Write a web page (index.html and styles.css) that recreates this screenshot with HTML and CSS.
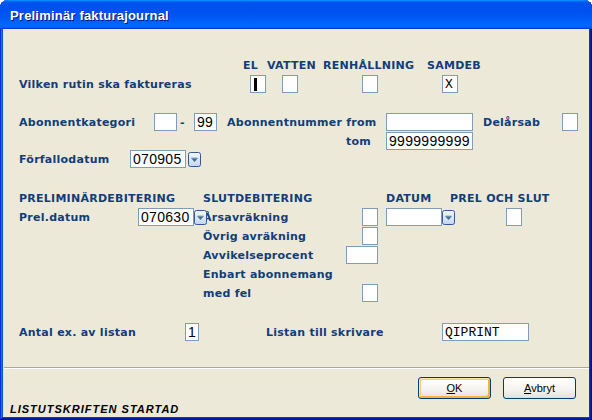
FILE: index.html
```html
<!DOCTYPE html>
<html lang="sv">
<head>
<meta charset="utf-8">
<title>Preliminär fakturajournal</title>
<link rel="stylesheet" href="styles.css">
</head>
<body>
<div class="window">
  <div class="titlebar"><span class="title">Preliminär fakturajournal</span></div>
  <div class="client">
    <div class="form">
      <div class="row hdr hdr-top">
        <span class="h-el">EL</span>
        <span class="h-vatten">VATTEN</span>
        <span class="h-renh">RENHÅLLNING</span>
        <span>SAMDEB</span>
      </div>

      <div class="row r-rutin">
        <span class="lbl w-rutin">Vilken rutin ska faktureras</span>
        <span class="box chk"><span class="caret"></span></span>
        <span class="box chk gap16"></span>
        <span class="box chk gap64"></span>
        <span class="box chk gap64 mono">X</span>
      </div>

      <div class="row r-kat">
        <span class="lbl w-kat">Abonnentkategori</span>
        <span class="box kat"></span>
        <span class="lbl dash">-</span>
        <span class="box kat val">99</span>
        <span class="lbl w-from">Abonnentnummer from</span>
        <span class="box num"></span>
        <span class="lbl w-delar">Delårsab</span>
        <span class="box chk"></span>
      </div>

      <div class="row r-tom">
        <span class="lbl w-tom">tom</span>
        <span class="box num val">9999999999</span>
      </div>

      <div class="row r-forf">
        <span class="lbl w-forf">Förfallodatum</span>
        <span class="box date val">070905</span>
        <span class="drop gap2"><svg width="13" height="15" viewBox="0 0 13 15"><defs><linearGradient id="g1" x1="0" y1="0" x2="0" y2="1"><stop offset="0" stop-color="#f4f8ff"/><stop offset="1" stop-color="#c3d4f3"/></linearGradient></defs><rect x="0.5" y="0.5" width="12" height="14" rx="2" fill="url(#g1)" stroke="#34578f"/><path d="M3 6 L10 6 L6.5 10 Z" fill="#4d6a8c"/><path d="M3.5 6 L9.5 6" stroke="#8fb4c9" stroke-width="1"/></svg></span>
      </div>

      <div class="row hdr hdr-mid">
        <span class="w-prelhdr">PRELIMINÄRDEBITERING</span>
        <span class="w-sluthdr">SLUTDEBITERING</span>
        <span class="w-datumhdr">DATUM</span>
        <span>PREL OCH SLUT</span>
      </div>

      <div class="row r-prel">
        <span class="lbl w-preldat">Prel.datum</span>
        <span class="box date val">070630</span>
        <span class="drop over"><svg width="13" height="15" viewBox="0 0 13 15"><defs><linearGradient id="g2" x1="0" y1="0" x2="0" y2="1"><stop offset="0" stop-color="#f4f8ff"/><stop offset="1" stop-color="#c3d4f3"/></linearGradient></defs><rect x="0.5" y="0.5" width="12" height="14" rx="2" fill="url(#g2)" stroke="#34578f"/><path d="M3 6 L10 6 L6.5 10 Z" fill="#4d6a8c"/><path d="M3.5 6 L9.5 6" stroke="#8fb4c9" stroke-width="1"/></svg></span>
        <span class="lbl w-ars">Årsavräkning</span>
        <span class="box chk"></span>
        <span class="box date gap8"></span>
        <span class="drop"><svg width="13" height="15" viewBox="0 0 13 15"><defs><linearGradient id="g3" x1="0" y1="0" x2="0" y2="1"><stop offset="0" stop-color="#f4f8ff"/><stop offset="1" stop-color="#c3d4f3"/></linearGradient></defs><rect x="0.5" y="0.5" width="12" height="14" rx="2" fill="url(#g3)" stroke="#34578f"/><path d="M3 6 L10 6 L6.5 10 Z" fill="#4d6a8c"/><path d="M3.5 6 L9.5 6" stroke="#8fb4c9" stroke-width="1"/></svg></span>
        <span class="box chk gap51"></span>
      </div>

      <div class="row r-sub">
        <span class="lbl w-sub">Övrig avräkning</span>
        <span class="box chk"></span>
      </div>
      <div class="row r-sub">
        <span class="lbl w-avv">Avvikelseprocent</span>
        <span class="box pct"></span>
      </div>
      <div class="row r-sub">
        <span class="lbl w-sub">Enbart abonnemang</span>
      </div>
      <div class="row r-sub">
        <span class="lbl w-sub">med fel</span>
        <span class="box chk"></span>
      </div>

      <div class="row r-antal">
        <span class="lbl w-antal">Antal ex. av listan</span>
        <span class="box one val">1</span>
        <span class="lbl w-listan">Listan till skrivare</span>
        <span class="box num mono">QIPRINT</span>
      </div>
    </div>

    <div class="sep"></div>

    <div class="buttons">
      <button class="btn default"><u>O</u>K</button>
      <button class="btn"><u>A</u>vbryt</button>
    </div>

    <div class="status">LISTUTSKRIFTEN STARTAD</div>
  </div>
</div>
</body>
</html>
```

FILE: styles.css
```css
* { box-sizing: border-box; }
html, body { margin: 0; padding: 0; }
body {
  width: 592px;
  height: 420px;
  overflow: hidden;
  background: #ffffff;
  font-family: "DejaVu Sans", Verdana, sans-serif;
}

.window {
  width: 592px;
  height: 420px;
  display: flex;
  flex-direction: column;
  padding: 0 3px 3px 3px;
  background: #0058ee;
  border-radius: 8px 8px 0 0;
  box-shadow: inset -1px -1px #00138c, inset 1px 1px #0831d9, inset -2px -2px #001ea0, inset 2px 2px #166aee, inset -3px -3px #003bda, inset 3px 3px #0855dd;
}

.titlebar {
  height: 29px;
  margin: 0 -3px;
  flex: none;
  display: flex;
  align-items: center;
  padding: 2px 0 0 10px;
  border-radius: 8px 8px 0 0;
  background: linear-gradient(180deg, #0997ff, #0053ee 8%, #0050ee 40%, #0066ff 88%, #0066ff 93%, #005bff 95%, #003dd7 96%, #003dd7);
}
.title {
  color: #ffffff;
  font-family: "Liberation Sans", Arial, sans-serif;
  font-weight: bold;
  font-size: 13px;
  letter-spacing: 0.2px;
  text-shadow: 1px 1px #0f1089;
}

.client {
  flex: 1;
  background: #ece9d8;
  display: flex;
  flex-direction: column;
}

.form { padding-left: 16px; }

.row {
  display: flex;
  align-items: center;
  height: 18px;
}

.lbl, .hdr {
  color: #123d79;
  font-weight: bold;
  font-size: 11px;
  letter-spacing: 0.25px;
  white-space: nowrap;
  flex: none;
}
.hdr { height: 14px; }

.hdr-top { margin-top: 29px; padding-left: 224px; }
.h-el { width: 24px; }
.h-vatten { width: 56px; }
.h-renh { width: 104px; }

.r-rutin { margin-top: 3px; }
.w-rutin { width: 231px; }

.r-kat { margin-top: 20px; }
.w-kat { width: 135px; }
.dash { width: 17px; padding-left: 3px; }
.w-from { width: 159px; margin-left: 10px; }
.w-delar { width: 79px; margin-left: 10px; }

.r-tom { margin-top: 1px; }
.w-tom { width: 40px; margin-left: 327px; }

.r-forf { margin-top: 0; }
.w-forf { width: 111px; }

.hdr-mid { margin-top: 23px; }
.w-prelhdr { width: 184px; }
.w-sluthdr { width: 183px; }
.w-datumhdr { width: 64px; }

.r-prel { margin-top: 3px; }
.w-preldat { width: 119px; }
.w-ars { width: 159px; margin-left: -4px; }

.r-sub { margin-top: 1px; padding-left: 184px; }
.w-sub { width: 159px; }
.w-avv { width: 143px; }

.r-antal { margin-top: 21px; }
.w-antal { width: 166px; }
.w-listan { width: 176px; margin-left: 67px; }

.box {
  flex: none;
  height: 18px;
  background: #ffffff;
  border: 1px solid #7f9db9;
  display: flex;
  align-items: center;
  padding-left: 2px;
  font-family: "Liberation Sans", Arial, sans-serif;
  font-size: 14px;
  letter-spacing: 0.3px;
  color: #000000;
}
.chk { width: 16px; }
.kat { width: 23px; }
.num { width: 87px; }
.date { width: 56px; }
.pct { width: 32px; }
.one { width: 14px; padding-left: 2px; }

.gap2 { margin-left: 2px; }
.gap8 { margin-left: 8px; }
.gap16 { margin-left: 16px; }
.gap51 { margin-left: 51px; }
.gap64 { margin-left: 64px; }

.mono {
  font-family: "Liberation Mono", "Courier New", monospace;
  font-size: 13px;
  letter-spacing: 0;
}
.chk.mono { padding-left: 2px; }

.caret {
  display: block;
  width: 3px;
  height: 13px;
  margin-left: 1px;
  background: #000000;
}

.drop {
  flex: none;
  width: 13px;
  height: 15px;
  display: block;
  line-height: 0;
}
.drop svg { display: block; }
.drop.over { position: relative; z-index: 1; }

.sep {
  margin: 26px 0 0 1px;
  height: 2px;
  border-top: 1px solid #aca899;
  border-bottom: 1px solid #ffffff;
}

.buttons {
  margin-top: 8px;
  display: flex;
  justify-content: flex-end;
  gap: 12px;
  padding-right: 13px;
}
.btn {
  width: 73px;
  height: 22px;
  margin: 0;
  padding: 0;
  border: 1px solid #003c74;
  border-radius: 3px;
  background: linear-gradient(180deg, #ffffff 0%, #f4f3ee 60%, #e3e1d6 100%);
  font-family: "Liberation Sans", Arial, sans-serif;
  font-size: 11px;
  color: #000000;
}
.btn.default {
  box-shadow: inset 1px 1px #fee4a4, inset -1px -1px #f8b636, inset 2px 2px #fcd07b, inset -2px -2px #f7b23b;
}

.status {
  margin-top: 2px;
  height: 16px;
  padding-left: 7px;
  display: flex;
  align-items: center;
  font-family: "Liberation Sans", Arial, sans-serif;
  font-weight: bold;
  font-style: italic;
  font-size: 11px;
  letter-spacing: 1px;
  color: #000000;
}
```
